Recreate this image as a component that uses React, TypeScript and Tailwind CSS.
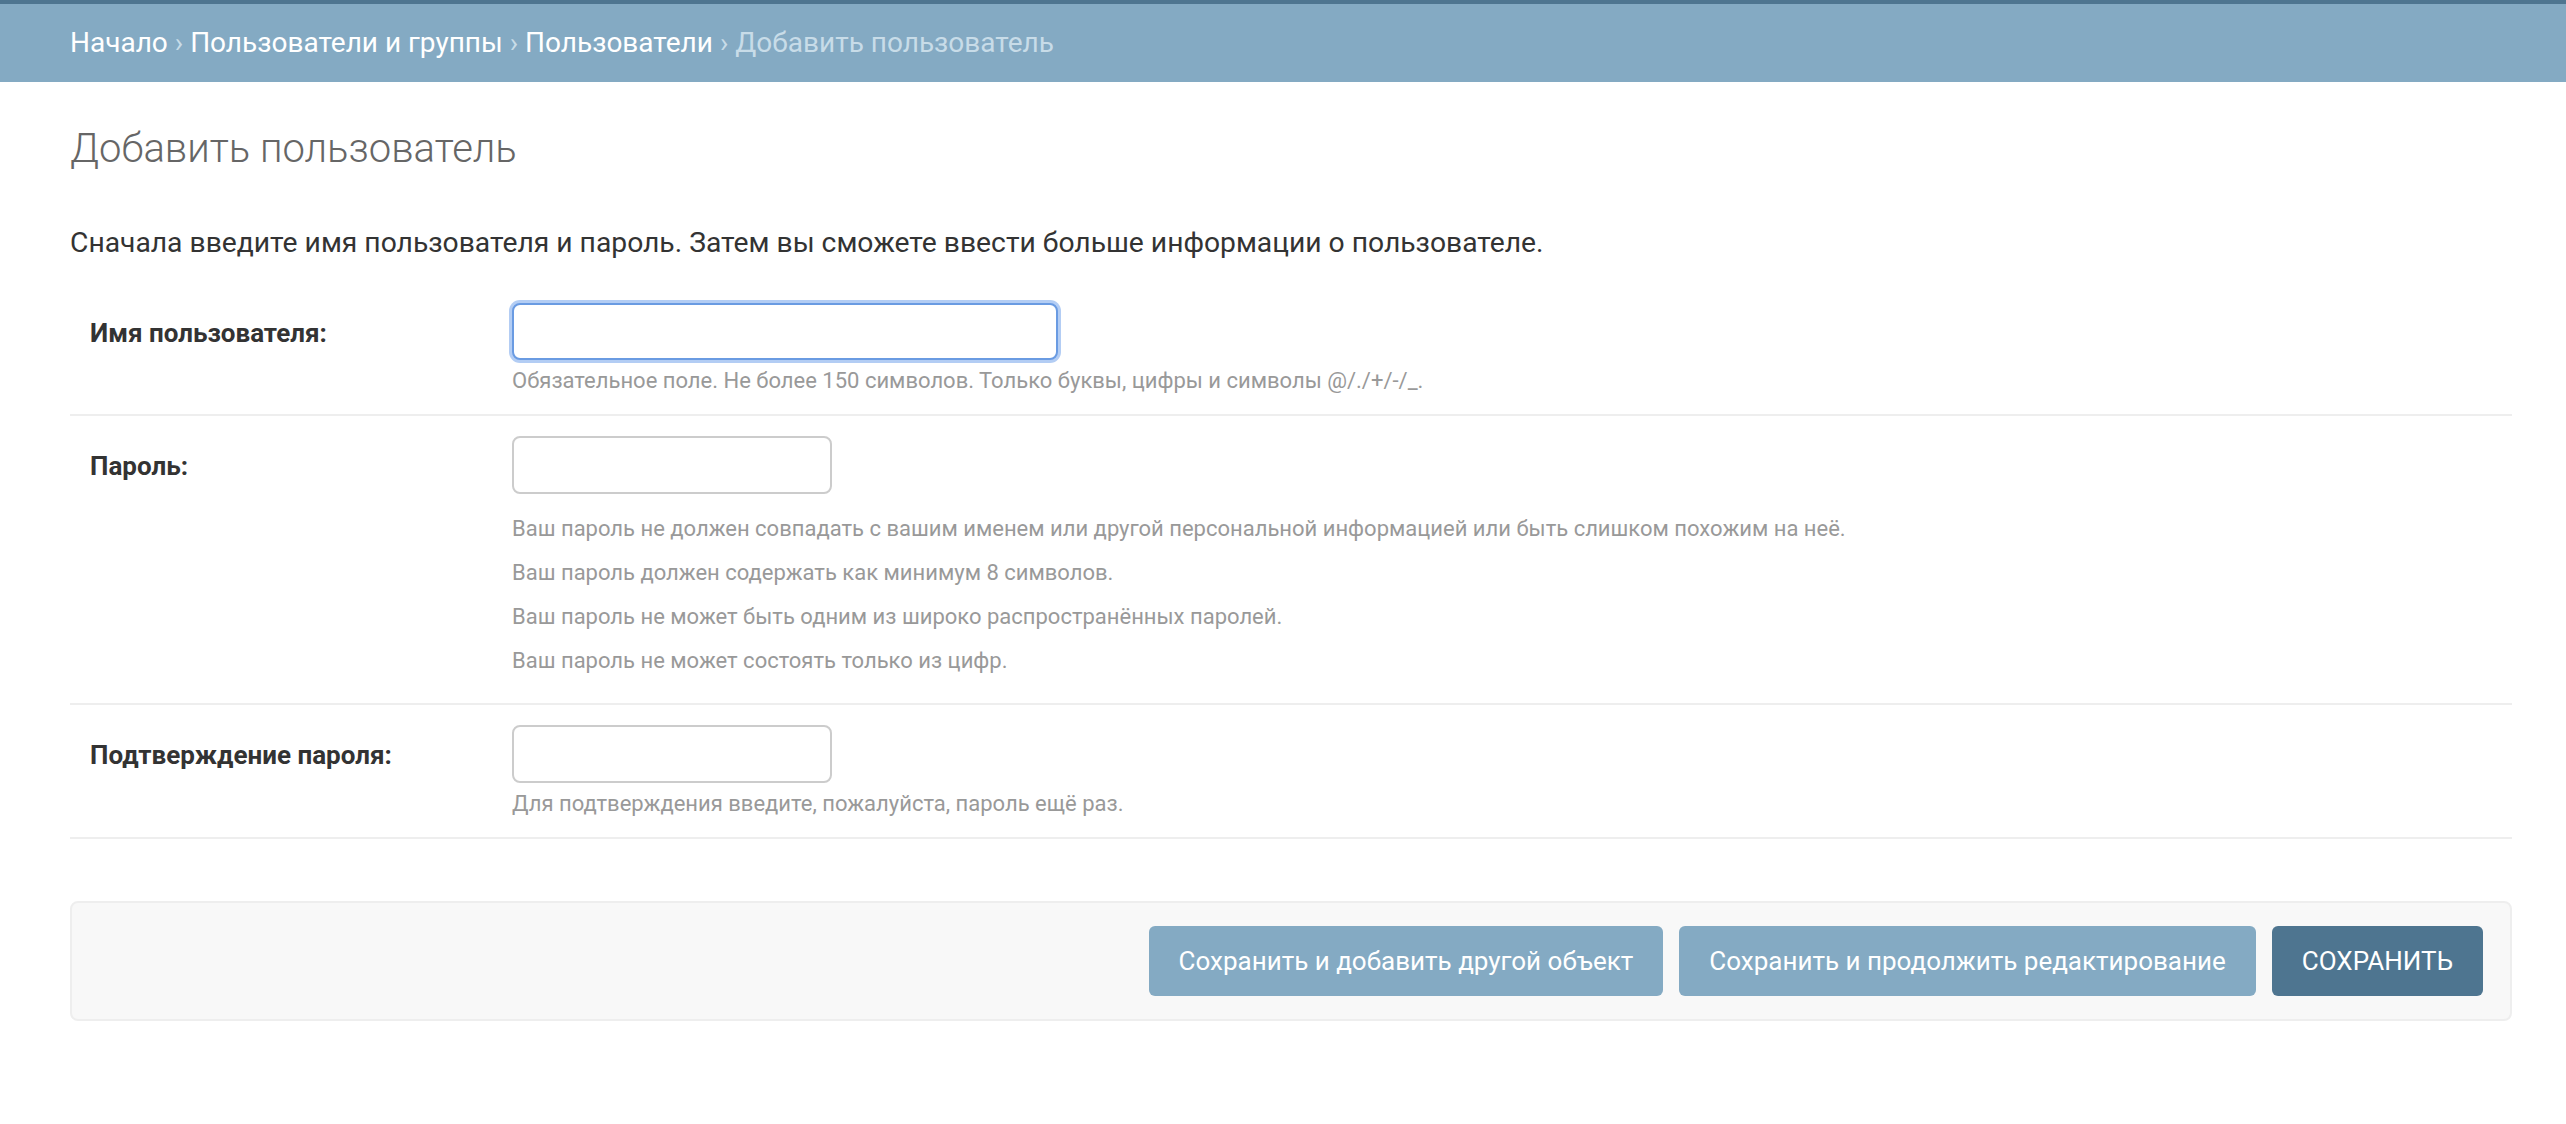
import React from "react";

type Row = {
  label: string;
  wide?: boolean;
  focused?: boolean;
  help: string[];
  list?: boolean;
};

const rows: Row[] = [
  {
    label: "Имя пользователя:",
    wide: true,
    focused: true,
    help: ["Обязательное поле. Не более 150 символов. Только буквы, цифры и символы @/./+/-/_."],
  },
  {
    label: "Пароль:",
    list: true,
    help: [
      "Ваш пароль не должен совпадать с вашим именем или другой персональной информацией или быть слишком похожим на неё.",
      "Ваш пароль должен содержать как минимум 8 символов.",
      "Ваш пароль не может быть одним из широко распространённых паролей.",
      "Ваш пароль не может состоять только из цифр.",
    ],
  },
  {
    label: "Подтверждение пароля:",
    help: ["Для подтверждения введите, пожалуйста, пароль ещё раз."],
  },
];

function Breadcrumbs() {
  return (
    <div className="border-t-4 border-[#4e7590] bg-[#84aac3] h-[82px] flex items-center pl-[70px]">
      <div className="text-[28px] text-[#c8dce8] whitespace-pre">
        <a className="text-white">Начало</a> › <a className="text-white">Пользователи и группы</a> ›{" "}
        <a className="text-white">Пользователи</a> › Добавить пользователь
      </div>
    </div>
  );
}

function FormRow({ row }: { row: Row }) {
  return (
    <div className="flex pt-5 pb-5 pl-[20px] border-b-2 border-[#eeeeee]">
      {/* LABEL */}
      <div className="w-[422px] shrink-0 pt-[14px] leading-[32px] text-[26px] font-bold text-[#333]">
        {row.label}
      </div>

      {/* FIELD */}
      <div className="flex flex-col">
        <input
          type={row.wide ? "text" : "password"}
          className={
            row.focused
              ? "w-[546px] h-[57px] rounded-[8px] border-2 border-[#6a9be2] shadow-[0_0_0_3px_#b3cdf4] outline-none bg-white"
              : "w-[320px] h-[58px] rounded-[8px] border-2 border-[#cccccc] outline-none bg-white"
          }
        />
        {row.list ? (
          <ul className="mt-[22px] mb-[9px] flex flex-col gap-[18px] text-[22px] leading-[26px] text-[#999]">
            {row.help.map((h) => (
              <li key={h}>{h}</li>
            ))}
          </ul>
        ) : (
          <p className="mt-[8px] text-[22px] leading-[26px] text-[#999]">{row.help[0]}</p>
        )}
      </div>
    </div>
  );
}

export default function App() {
  return (
    <div className="min-h-screen bg-white font-['Roboto',sans-serif]">
      <Breadcrumbs />

      <div className="pl-[70px] pr-[54px]">
        {/* TITLE */}
        <h1 className="mt-[43px] text-[40px] leading-[48px] font-light text-[#666]">
          Добавить пользователь
        </h1>

        <p className="mt-[52px] text-[28.25px] leading-[36px] text-[#333]">
          Сначала введите имя пользователя и пароль. Затем вы сможете ввести больше информации о пользователе.
        </p>

        {/* FIELDS */}
        <div className="mt-[22px]">
          {rows.map((r) => (
            <FormRow key={r.label} row={r} />
          ))}
        </div>

        {/* SUBMIT ROW */}
        <div className="mt-[62px] flex justify-end gap-4 bg-[#f8f8f8] border-2 border-[#eeeeee] rounded-[8px] py-[23px] px-[27px]">
          <button className="h-[70px] px-[30px] rounded-[6px] bg-[#84aac3] text-white text-[26px]">
            Сохранить и добавить другой объект
          </button>
          <button className="h-[70px] px-[30px] rounded-[6px] bg-[#84aac3] text-white text-[26px]">
            Сохранить и продолжить редактирование
          </button>
          <button className="h-[70px] px-[30px] rounded-[6px] bg-[#4e7590] text-white text-[26px]">
            СОХРАНИТЬ
          </button>
        </div>
      </div>
    </div>
  );
}
